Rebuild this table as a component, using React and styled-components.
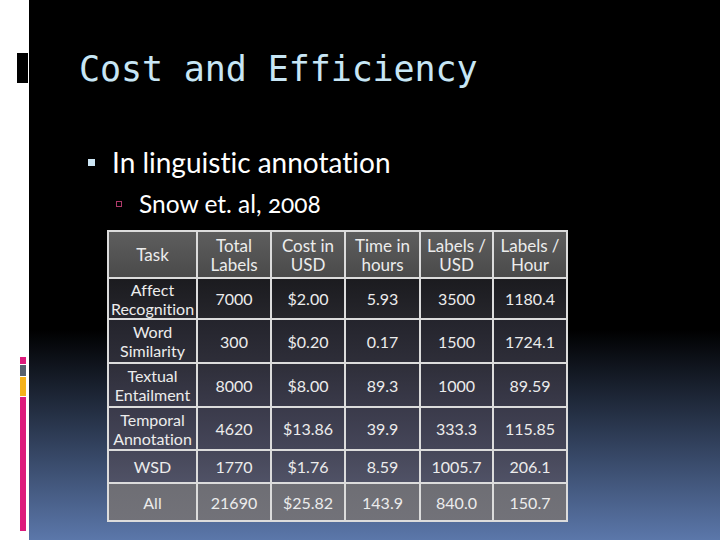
import React from "react";
import styled, { createGlobalStyle } from "styled-components";

const Global = createGlobalStyle`
  html, body { margin: 0; padding: 0; background: #000; }
  body { width: 720px; height: 540px; overflow: hidden; }
`;

const Slide = styled.div`
  width: 720px;
  height: 540px;
  display: flex;
`;

const Rail = styled.div`
  width: 29px;
  flex: none;
  background: #fff;
  display: flex;
  flex-direction: column;
`;

const Marker = styled.div`
  margin: 53px 0 0 17px;
  width: 11px;
  height: 30px;
  background: #000;
`;

const Bar = styled.div`
  margin: 274px 0 0 20px;
  width: 6px;
  display: flex;
  flex-direction: column;
  gap: 1px;
`;

const Seg = styled.div`
  height: ${(p) => p.$h}px;
  background: ${(p) => p.$c};
`;

const Main = styled.div`
  flex: 1;
  background: linear-gradient(to bottom, #000 0%, #000 61%, #5b77aa 100%);
  display: flex;
  flex-direction: column;
  padding: 46px 0 0 0;
`;

const Title = styled.h1`
  margin: 0 0 0 50px;
  font-family: "DejaVu Sans Mono", "Liberation Mono", monospace;
  font-weight: normal;
  font-size: 35px;
  line-height: 46px;
  color: #c7e6f5;
  letter-spacing: -0.1px;
`;

const Bullet = styled.div`
  display: flex;
  align-items: center;
  font-family: Lato, "Open Sans", sans-serif;
  color: #fff;
  font-size: ${(p) => (p.$sub ? 24.5 : 28)}px;
  line-height: ${(p) => (p.$sub ? 30 : 34)}px;
  margin-left: ${(p) => (p.$sub ? 87 : 59)}px;
  margin-top: ${(p) => (p.$sub ? 10 : 53)}px;
  font-variant-ligatures: none;
  font-variant-numeric: oldstyle-nums;
`;

const Square = styled.span`
  width: ${(p) => (p.$sub ? 6 : 7)}px;
  height: ${(p) => (p.$sub ? 6 : 7)}px;
  box-sizing: border-box;
  background: ${(p) => (p.$sub ? "transparent" : "#cde6f5")};
  border: ${(p) => (p.$sub ? "1px solid #b03a6a" : "none")};
  margin-right: 17px;
  flex: none;
`;

const Table = styled.table`
  margin: 11px 0 0 78px;
  width: 459px;
  table-layout: fixed;
  border-collapse: collapse;
  border: 2px solid #dcdcdc;
  font-family: "Gill Sans", Lato, "Open Sans", sans-serif;
  font-variant-ligatures: none;
  color: #ececec;
  font-size: 16px;
  line-height: 19px;
  text-align: center;
`;

const Col = styled.col`
  width: ${(p) => p.$w}px;
`;

const Row = styled.tr`
  height: ${(p) => p.$h}px;
  background: ${(p) => p.$bg};
`;

const Cell = styled.td`
  border: 2px solid #dcdcdc;
  padding: 0;
  vertical-align: middle;
  white-space: nowrap;
`;

const HeadCell = styled(Cell)`
  font-size: 17px;
`;

const widths = [89, 74, 74, 75, 73, 74];

const header = ["Task", ["Total", "Labels"], ["Cost in", "USD"], ["Time in", "hours"], ["Labels /", "USD"], ["Labels /", "Hour"]];

const rows = [
  { h: 41, bg: "linear-gradient(#1b1b1f, #26262c)", cells: [["Affect", "Recognition"], "7000", "$2.00", "5.93", "3500", "1180.4"] },
  { h: 44, bg: "linear-gradient(#24242c, #2e2e39)", cells: [["Word", "Similarity"], "300", "$0.20", "0.17", "1500", "1724.1"] },
  { h: 44, bg: "linear-gradient(#2e2e39, #3a3a4a)", cells: [["Textual", "Entailment"], "8000", "$8.00", "89.3", "1000", "89.59"] },
  { h: 43, bg: "linear-gradient(#3a3a4a, #454659)", cells: [["Temporal", "Annotation"], "4620", "$13.86", "39.9", "333.3", "115.85"] },
  { h: 33, bg: "linear-gradient(#464759, #505266)", cells: ["WSD", "1770", "$1.76", "8.59", "1005.7", "206.1"] },
  { h: 38, bg: "linear-gradient(#6e6e74, #727279)", cells: ["All", "21690", "$25.82", "143.9", "840.0", "150.7"] },
];

const renderContent = (c) =>
  Array.isArray(c) ? (
    <>
      {c[0]}
      <br />
      {c[1]}
    </>
  ) : (
    c
  );

export default function App() {
  return (
    <>
      <Global />
      <Slide>
        <Rail>
          <Marker />
          <Bar>
            <Seg $h={7} $c="#dd1b7c" />
            <Seg $h={11} $c="#56606e" />
            <Seg $h={19} $c="#f5b21a" />
            <Seg $h={134} $c="#dd1b7c" />
          </Bar>
        </Rail>
        <Main>
          <Title>Cost and Efficiency</Title>
          <Bullet>
            <Square />
            In linguistic annotation
          </Bullet>
          <Bullet $sub>
            <Square $sub />
            Snow et. al, 2008
          </Bullet>
          <Table>
            <colgroup>
              {widths.map((w, i) => (
                <Col key={i} $w={w} />
              ))}
            </colgroup>
            <tbody>
              <Row $h={47} $bg="linear-gradient(#5e5e5e, #4a4a4a)">
                {header.map((c, i) => (
                  <HeadCell key={i}>{renderContent(c)}</HeadCell>
                ))}
              </Row>
              {rows.map((r, ri) => (
                <Row key={ri} $h={r.h} $bg={r.bg}>
                  {r.cells.map((c, i) => (
                    <Cell key={i}>{renderContent(c)}</Cell>
                  ))}
                </Row>
              ))}
            </tbody>
          </Table>
        </Main>
      </Slide>
    </>
  );
}
